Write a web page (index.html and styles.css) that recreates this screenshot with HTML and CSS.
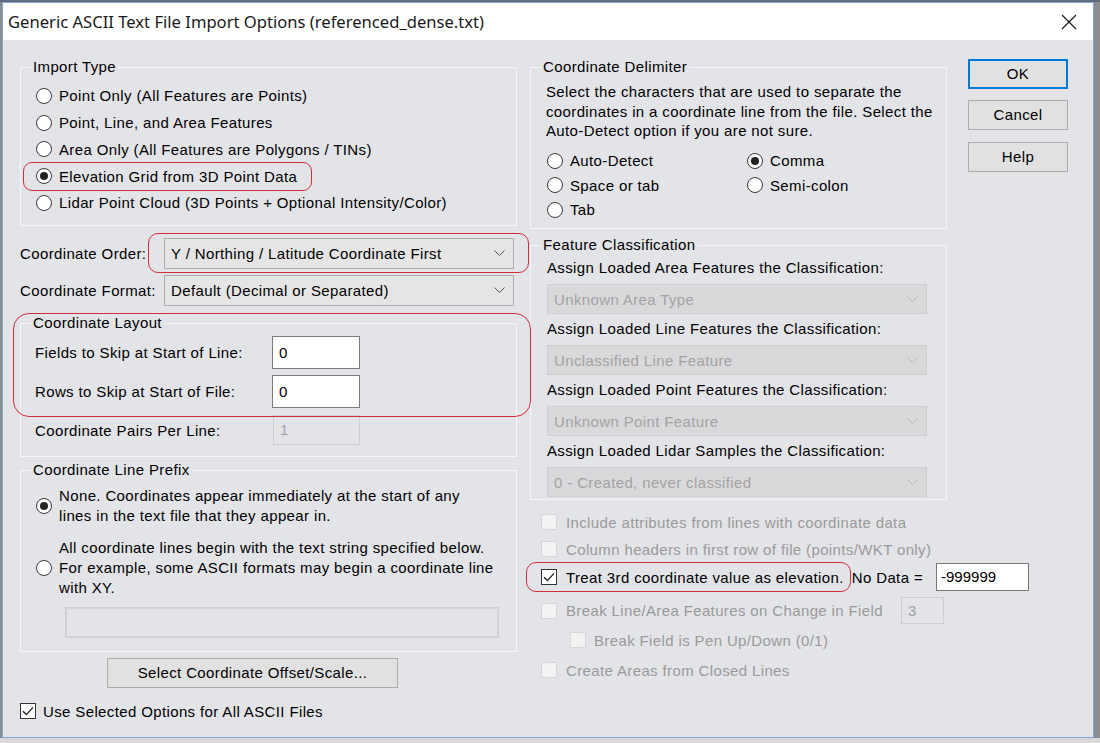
FILE: index.html
```html
<!DOCTYPE html>
<html>
<head>
<meta charset="utf-8">
<title>Generic ASCII Text File Import Options</title>
<link rel="stylesheet" href="styles.css">
</head>
<body>
<div class="window">
  <div class="titlebar">
    <span class="title">Generic ASCII Text File Import Options (referenced_dense.txt)</span>
    <svg class="close" width="16" height="16" viewBox="0 0 16 16"><path d="M1 1L15 15M15 1L1 15" stroke="#111" stroke-width="1.1" fill="none"/></svg>
  </div>

  <div class="content">
    <!-- left column -->
    <div class="col-left">
      <fieldset class="grp grp-import">
        <legend>Import Type</legend>
        <div class="grp-body">
          <div class="opt"><span class="radio"></span>Point Only (All Features are Points)</div>
          <div class="opt"><span class="radio"></span>Point, Line, and Area Features</div>
          <div class="opt"><span class="radio"></span>Area Only (All Features are Polygons / TINs)</div>
          <div class="opt"><span class="radio on"></span>Elevation Grid from 3D Point Data</div>
          <div class="opt"><span class="radio"></span>Lidar Point Cloud (3D Points + Optional Intensity/Color)</div>
        </div>
      </fieldset>

      <div class="form-row row-order">
        <span class="form-lbl">Coordinate Order:</span>
        <div class="select">Y / Northing / Latitude Coordinate First<svg width="11" height="7" viewBox="0 0 11 7"><path d="M0.5 0.5L5.5 5.5L10.5 0.5" stroke="#555" fill="none"/></svg></div>
      </div>
      <div class="form-row row-format">
        <span class="form-lbl">Coordinate Format:</span>
        <div class="select">Default (Decimal or Separated)<svg width="11" height="7" viewBox="0 0 11 7"><path d="M0.5 0.5L5.5 5.5L10.5 0.5" stroke="#555" fill="none"/></svg></div>
      </div>

      <fieldset class="grp grp-layout">
        <legend>Coordinate Layout</legend>
        <div class="grp-body">
          <div class="lay-row"><span class="lay-lbl">Fields to Skip at Start of Line:</span><div class="edit">0</div></div>
          <div class="lay-row r2"><span class="lay-lbl">Rows to Skip at Start of File:</span><div class="edit">0</div></div>
          <div class="lay-row r3"><span class="lay-lbl">Coordinate Pairs Per Line:</span><div class="edit off">1</div></div>
        </div>
      </fieldset>

      <fieldset class="grp grp-prefix">
        <legend>Coordinate Line Prefix</legend>
        <div class="grp-body">
          <div class="opt multi"><span class="radio on"></span><span>None. Coordinates appear immediately at the start of any<br>lines in the text file that they appear in.</span></div>
          <div class="opt multi second"><span class="radio"></span><span>All coordinate lines begin with the text string specified below.<br>For example, some ASCII formats may begin a coordinate line<br>with XY.</span></div>
          <div class="edit off prefix-box"></div>
        </div>
      </fieldset>

      <div class="btn btn-offset">Select Coordinate Offset/Scale...</div>
      <div class="chk-row use-all"><span class="chk on"><svg width="14" height="14" viewBox="0 0 14 14"><path d="M2 7.2L5.4 10.6L12 3.4" stroke="#222" stroke-width="1.4" fill="none"/></svg></span>Use Selected Options for All ASCII Files</div>
    </div>

    <!-- right column -->
    <div class="col-right">
      <fieldset class="grp grp-delim">
        <legend>Coordinate Delimiter</legend>
        <div class="grp-body">
          <p class="desc">Select the characters that are used to separate the<br>coordinates in a coordinate line from the file. Select the<br>Auto-Detect option if you are not sure.</p>
          <div class="delim-grid">
            <div class="opt"><span class="radio"></span>Auto-Detect</div>
            <div class="opt"><span class="radio on"></span>Comma</div>
            <div class="opt"><span class="radio"></span>Space or tab</div>
            <div class="opt"><span class="radio"></span>Semi-colon</div>
            <div class="opt"><span class="radio"></span>Tab</div>
          </div>
        </div>
      </fieldset>

      <fieldset class="grp grp-class">
        <legend>Feature Classification</legend>
        <div class="grp-body">
          <div class="cls-lbl">Assign Loaded Area Features the Classification:</div>
          <div class="select off">Unknown Area Type<svg width="11" height="7" viewBox="0 0 11 7"><path d="M0.5 0.5L5.5 5.5L10.5 0.5" stroke="#b5b5b5" fill="none"/></svg></div>
          <div class="cls-lbl">Assign Loaded Line Features the Classification:</div>
          <div class="select off">Unclassified Line Feature<svg width="11" height="7" viewBox="0 0 11 7"><path d="M0.5 0.5L5.5 5.5L10.5 0.5" stroke="#b5b5b5" fill="none"/></svg></div>
          <div class="cls-lbl">Assign Loaded Point Features the Classification:</div>
          <div class="select off">Unknown Point Feature<svg width="11" height="7" viewBox="0 0 11 7"><path d="M0.5 0.5L5.5 5.5L10.5 0.5" stroke="#b5b5b5" fill="none"/></svg></div>
          <div class="cls-lbl">Assign Loaded Lidar Samples the Classification:</div>
          <div class="select off">0 - Created, never classified<svg width="11" height="7" viewBox="0 0 11 7"><path d="M0.5 0.5L5.5 5.5L10.5 0.5" stroke="#b5b5b5" fill="none"/></svg></div>
        </div>
      </fieldset>

      <div class="checks">
        <div class="chk-row dis c1"><span class="chk"></span>Include attributes from lines with coordinate data</div>
        <div class="chk-row dis c2"><span class="chk"></span>Column headers in first row of file (points/WKT only)</div>
        <div class="chk-row c3"><span class="chk on"><svg width="14" height="14" viewBox="0 0 14 14"><path d="M2 7.2L5.4 10.6L12 3.4" stroke="#222" stroke-width="1.4" fill="none"/></svg></span>Treat 3rd coordinate value as elevation.<span class="nodata">No Data =</span><div class="edit nodata-box">-999999</div></div>
        <div class="chk-row dis c4"><span class="chk"></span>Break Line/Area Features on Change in Field<div class="edit off field-box">3</div></div>
        <div class="chk-row dis c5"><span class="chk"></span>Break Field is Pen Up/Down (0/1)</div>
        <div class="chk-row dis c6"><span class="chk"></span>Create Areas from Closed Lines</div>
      </div>
    </div>

    <!-- buttons -->
    <div class="col-btns">
      <div class="btn btn-ok">OK</div>
      <div class="btn btn-cancel">Cancel</div>
      <div class="btn btn-help">Help</div>
    </div>
  </div>

  <!-- red highlight marks drawn over the dialog -->
  <div class="mark m1"></div>
  <div class="mark m2"></div>
  <div class="mark m3"></div>
  <div class="mark m4"></div>
</div>
</body>
</html>
```

FILE: styles.css
```css
* {margin:0; padding:0; box-sizing:border-box;}

body {
  width:1100px; height:743px; overflow:hidden;
  background:linear-gradient(to bottom, #5d6b7c 0, #5d6b7c 2px, #8a8c90 2px, #8a8c90 738px, #d9d9d9 738px);
  font:15px "Liberation Sans", Arial, sans-serif; letter-spacing:0.37px; color:#000;
}

.window {position:relative; width:1092px; height:736px; margin:2px 0 0 2px; border:1px solid #82a9d6; background:#e3e4e8;}

.titlebar {height:37px; background:#fff; display:flex; align-items:center; justify-content:space-between; padding:0 16px 0 5px;}
.title {font:16.6px "Noto Sans", "Open Sans", sans-serif; letter-spacing:0; color:#1a1a1a;}

.content {display:grid; grid-template-columns:497px 417px 108px; column-gap:13px; padding:18px 0 0 17px;}

/* group boxes */
.grp {border:1px solid #f5f6f8; min-width:0; display:block;}
.grp legend {margin-left:10px; padding:0 2px; line-height:18px; font-size:15px;}
.grp-body {padding-left:15px;}

.opt {display:flex; align-items:center; height:26.75px; white-space:nowrap;}
.radio {position:relative; flex:none; width:16px; height:16px; margin-right:7px; border:1px solid #3a3a3a; border-radius:50%; background:#fff;}
.radio.on::after {content:""; position:absolute; left:3px; top:3px; width:8px; height:8px; border-radius:50%; background:#222;}

.grp-import {height:168px;}
.grp-import .grp-body {padding-top:6.5px;}

/* dropdowns */
.form-row {display:flex; align-items:center;}
.form-lbl {width:144px; flex:none; white-space:nowrap;}
.select {display:flex; align-items:center; justify-content:space-between; height:31px; padding:0 8px 0 6px; border:1px solid #adadad; background:#e5e5e5; white-space:nowrap;}
.form-row .select {width:350px;}
.select.off {border-color:#cfcfcf; background:#d9d9db; color:#a3a3a3;}
.row-order {margin-top:12px;}
.row-format {margin-top:6px;}

/* edits */
.edit {height:33px; width:88px; padding:0 6px; line-height:31px; border:1px solid #7a7a7a; background:#fff;}
.edit.off {border-color:#cdcdcd; background:#e3e4e8; color:#a0a0a0;}

.grp-layout {height:143px; margin-top:8px;}
.grp-layout .grp-body {padding:4px 0 0 14px;}
.lay-row {display:flex; align-items:center;}
.lay-lbl {width:237px; flex:none; white-space:nowrap;}
.lay-row.r2 {margin-top:6px;}
.lay-row.r3 {margin-top:7px;}
.lay-row.r3 .edit {height:30px; line-height:28px; width:87px; margin-left:1px;}

.grp-prefix {height:191px; margin-top:4px;}
.grp-prefix .grp-body {padding-top:7px;}
.opt.multi {height:auto; line-height:20px;}
.opt.second {margin-top:12px;}
.prefix-box {width:434px; height:31px; margin:9px 0 0 29px; border:1px solid #f7f7f8; box-shadow:inset 0 0 0 1px #d4d5d8;}

/* buttons */
.btn {height:30px; line-height:28px; text-align:center; border:1px solid #adadad; background:#e1e1e1;}
.btn-offset {width:291px; margin:6px 0 0 87px;}

/* checkboxes */
.chk-row {display:flex; align-items:center; height:24px; white-space:nowrap;}
.chk {flex:none; display:flex; align-items:center; justify-content:center; width:16px; height:16px; margin-right:9px; border:1px solid #d7d7d9; background:#f3f3f4;}
.chk.on {border-color:#333; background:#fff;}
.chk-row.dis {color:#9a9a9a;}
.use-all {margin-top:11px;}
.use-all .chk {margin-right:7px;}

.col-right {display:flex; flex-direction:column;}
.grp-delim {height:171px;}
.desc {padding-top:6px; line-height:19.5px; white-space:nowrap;}
.delim-grid {display:grid; grid-template-columns:200px 1fr; margin:8px 0 0 1px;}
.delim-grid .opt {height:24.5px;}

.grp-class {height:264px; margin-top:7px;}
.grp-class .grp-body {padding:4px 0 0 16px;}
.cls-lbl {line-height:20px; margin-bottom:6px; white-space:nowrap;}
.grp-class .select {width:380px; height:30px; margin-bottom:5px;}

.checks {padding-left:11px;}
.checks .c1 {margin-top:10px;}
.checks .c2 {margin-top:3px;}
.checks .c3 {margin-top:2px; height:28px;}
.checks .c4 {margin-top:6px; height:27px;}
.checks .c5 {margin-top:4px; padding-left:29px;}
.checks .c5 .chk {margin-right:8px;}
.checks .c6 {margin-top:6px;}
.nodata {margin-left:8px;}
.nodata-box {flex:none; width:93px; height:28px; line-height:26px; margin-left:13px; padding:0 4px; letter-spacing:0;}
.field-box {flex:none; width:43px; height:27px; line-height:25px; margin-left:18px;}

.col-btns {margin-left:8px; padding-top:1px;}
.btn-ok {border:2px solid #0078d7; line-height:26px;}
.btn-cancel {margin-top:11px;}
.btn-help {margin-top:12px;}

/* red annotation outlines */
.mark {position:absolute; border:1px solid #cf2f3a; pointer-events:none;}
.m1 {left:20px; top:159px; width:289px; height:29px; border-radius:9px;}
.m2 {left:145px; top:230px; width:381px; height:40px; border-radius:10px;}
.m3 {left:10px; top:310px; width:518px; height:104px; border-radius:16px;}
.m4 {left:523px; top:559px; width:325px; height:30px; border-radius:10px;}
```
